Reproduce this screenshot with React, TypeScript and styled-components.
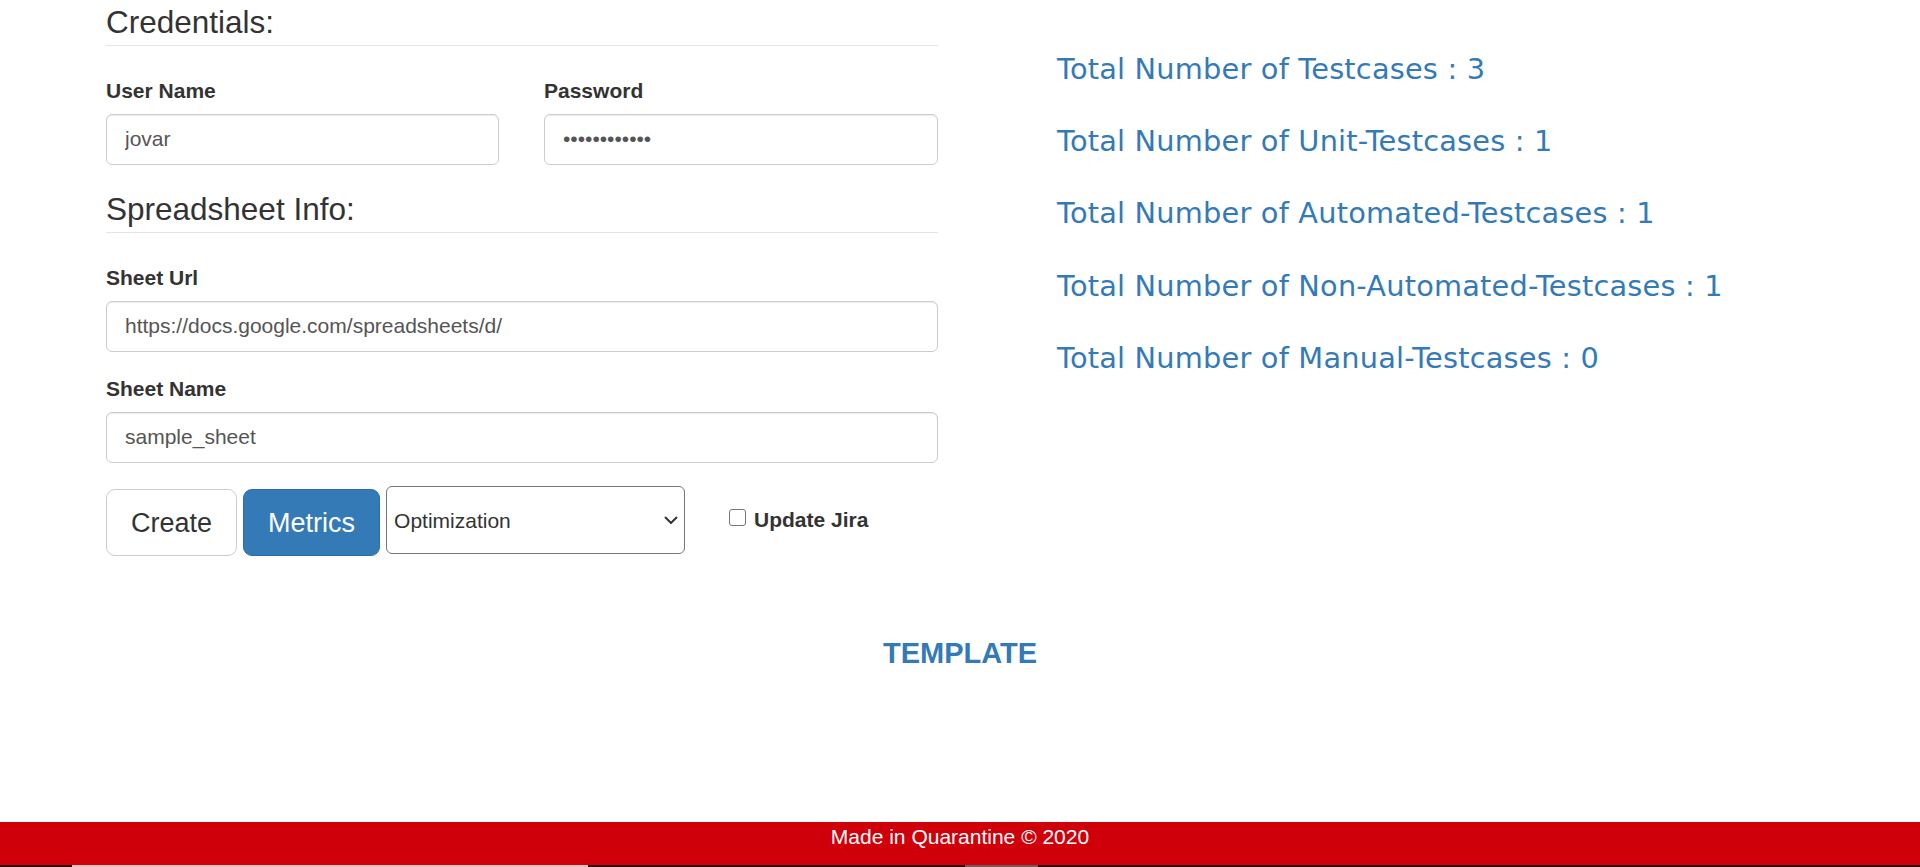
import React from "react";
import styled, { createGlobalStyle } from "styled-components";

const GlobalStyle = createGlobalStyle`
  html, body {
    margin: 0;
    padding: 0;
    background: #ffffff;
  }
  body {
    font-family: "Liberation Sans", Arial, Helvetica, sans-serif;
    color: #333333;
  }
  * { box-sizing: border-box; }
`;

const Page = styled.div`
  min-height: 100vh;
  display: flex;
  flex-direction: column;
`;

const Main = styled.div`
  display: flex;
  align-items: flex-start;
  padding-left: 106px;
`;

const FormColumn = styled.div`
  width: 832px;
  display: flex;
  flex-direction: column;
`;

const Legend = styled.div`
  font-size: 31.5px;
  line-height: 45px;
  color: #333333;
  border-bottom: 1px solid #e5e5e5;
  margin-bottom: 30px;
`;

const FieldRow = styled.div`
  display: grid;
  grid-template-columns: 393px 394px;
  column-gap: 45px;
`;

const Field = styled.div`
  display: flex;
  flex-direction: column;
  margin-bottom: 22.5px;
`;

const Label = styled.label`
  font-size: 21px;
  line-height: 30px;
  font-weight: bold;
  color: #333333;
  margin-bottom: 7.5px;
`;

const TextInput = styled.input`
  display: block;
  width: 100%;
  height: 51px;
  padding: 9px 18px;
  font-family: "Liberation Sans", Arial, sans-serif;
  font-size: 21px;
  line-height: 30px;
  color: #555555;
  background: #ffffff;
  border: 1px solid #cccccc;
  border-radius: 6px;
  box-shadow: inset 0 1px 1px rgba(0, 0, 0, 0.075);
  outline: none;
`;

const ActionRow = styled.div`
  display: flex;
  align-items: flex-start;
  height: 71px;
`;

const Button = styled.button<{ $primary?: boolean }>`
  height: 67px;
  margin-top: 4px;
  margin-right: 6px;
  padding: 0 24px;
  font-family: "Liberation Sans", Arial, sans-serif;
  font-size: 27px;
  line-height: 36px;
  border-radius: 9px;
  border: 1px solid ${(p) => (p.$primary ? "#2e6da4" : "#cccccc")};
  background: ${(p) => (p.$primary ? "#337ab7" : "#ffffff")};
  color: ${(p) => (p.$primary ? "#ffffff" : "#333333")};
  cursor: pointer;
`;

const SelectWrap = styled.div`
  position: relative;
  width: 299px;
  height: 68px;
  margin-top: 1px;
`;

const Select = styled.select`
  appearance: none;
  -webkit-appearance: none;
  width: 100%;
  height: 100%;
  padding: 0 30px 0 7px;
  font-family: "Liberation Sans", Arial, sans-serif;
  font-size: 21px;
  color: #333333;
  background: #ffffff;
  border: 1px solid #767676;
  border-radius: 6px;
  outline: none;
`;

const Chevron = styled.svg`
  position: absolute;
  right: 7px;
  top: 30px;
  width: 14px;
  height: 8px;
  pointer-events: none;
`;

const CheckLabel = styled.label`
  display: flex;
  align-items: center;
  gap: 8px;
  margin-left: 44px;
  margin-top: 20px;
  font-size: 21px;
  line-height: 30px;
  font-weight: bold;
  color: #333333;
`;

const CheckBox = styled.span`
  display: inline-block;
  width: 17px;
  height: 17px;
  margin-top: -5px;
  border: 1.5px solid #767676;
  border-radius: 3px;
  background: #ffffff;
`;

const StatsColumn = styled.div`
  margin-left: 119px;
  padding-top: 48px;
  display: flex;
  flex-direction: column;
  gap: 30.2px;
`;

const Stat = styled.div`
  font-family: "DejaVu Sans", "Liberation Sans", sans-serif;
  font-size: 28.8px;
  letter-spacing: 0.2px;
  line-height: 42px;
  color: #337ab7;
  white-space: nowrap;
`;

const TemplateLink = styled.a`
  align-self: center;
  margin-top: 77px;
  font-size: 29px;
  line-height: 40px;
  font-weight: bold;
  color: #337ab7;
  text-decoration: none;
`;

const Footer = styled.footer`
  margin-top: auto;
  height: 43px;
  background: #d0000a;
  color: #ffffff;
  font-size: 21px;
  line-height: 30px;
  text-align: center;
`;

const BottomStrip = styled.div`
  height: 2px;
  display: flex;
  background: #2a0c0c;
`;

const StripSegment = styled.div<{ $w: number; $c: string }>`
  width: ${(p) => p.$w}px;
  background: ${(p) => p.$c};
`;

const stats = [
  "Total Number of Testcases : 3",
  "Total Number of Unit-Testcases : 1",
  "Total Number of Automated-Testcases : 1",
  "Total Number of Non-Automated-Testcases : 1",
  "Total Number of Manual-Testcases : 0",
];

export default function App() {
  return (
    <>
      <GlobalStyle />
      <Page>
        <Main>
          <FormColumn>
            <Legend>Credentials:</Legend>
            <FieldRow>
              <Field>
                <Label>User Name</Label>
                <TextInput type="text" defaultValue="jovar" readOnly />
              </Field>
              <Field>
                <Label>Password</Label>
                <TextInput type="password" defaultValue="abcdefghijkl" readOnly />
              </Field>
            </FieldRow>
            <Legend>Spreadsheet Info:</Legend>
            <Field>
              <Label>Sheet Url</Label>
              <TextInput
                type="text"
                defaultValue="https://docs.google.com/spreadsheets/d/"
                readOnly
              />
            </Field>
            <Field>
              <Label>Sheet Name</Label>
              <TextInput type="text" defaultValue="sample_sheet" readOnly />
            </Field>
            <ActionRow>
              <Button>Create</Button>
              <Button $primary>Metrics</Button>
              <SelectWrap>
                <Select defaultValue="optimization">
                  <option value="optimization">Optimization</option>
                </Select>
                <Chevron viewBox="0 0 14 8">
                  <polyline
                    points="1,1 7,7 13,1"
                    fill="none"
                    stroke="#333"
                    strokeWidth="2"
                  />
                </Chevron>
              </SelectWrap>
              <CheckLabel>
                <CheckBox />
                Update Jira
              </CheckLabel>
            </ActionRow>
          </FormColumn>
          <StatsColumn>
            {stats.map((s) => (
              <Stat key={s}>{s}</Stat>
            ))}
          </StatsColumn>
        </Main>
        <TemplateLink href="#">TEMPLATE</TemplateLink>
        <Footer>Made in Quarantine © 2020</Footer>
        <BottomStrip>
          <StripSegment $w={72} $c="#2a0c0c" />
          <StripSegment $w={516} $c="#d8c4c4" />
          <StripSegment $w={377} $c="#2a0c0c" />
          <StripSegment $w={73} $c="#6e5c5c" />
        </BottomStrip>
      </Page>
    </>
  );
}
